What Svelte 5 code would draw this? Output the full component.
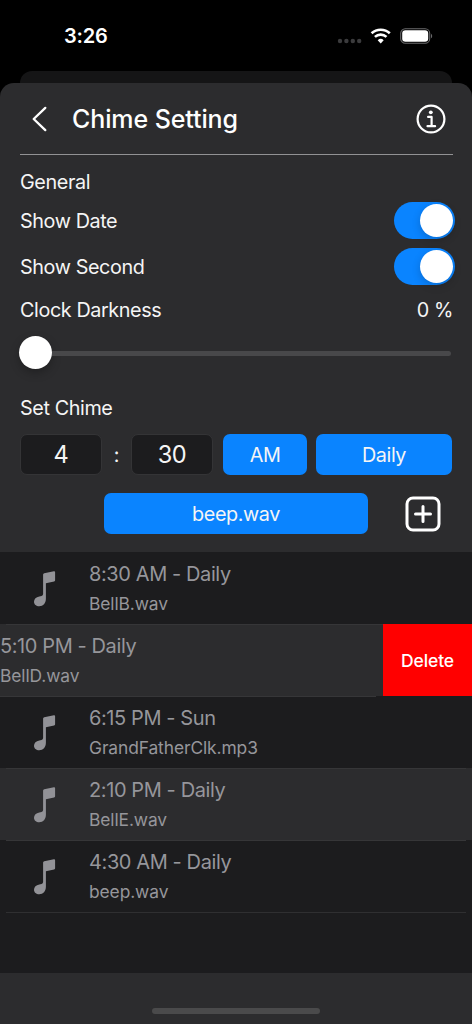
<script>
  let showDate = true;
  let showSecond = true;
  let darkness = 0;

  let chimes = [
    { time: '8:30 AM - Daily', sound: 'BellB.wav' },
    { time: '5:10 PM - Daily', sound: 'BellD.wav', swiped: true },
    { time: '6:15 PM - Sun', sound: 'GrandFatherClk.mp3' },
    { time: '2:10 PM - Daily', sound: 'BellE.wav' },
    { time: '4:30 AM - Daily', sound: 'beep.wav' }
  ];

  function removeChime(chime) {
    chimes = chimes.filter((c) => c !== chime);
  }
</script>

<div class="screen">
  <div class="status-bar">
    <span class="clock">3:26</span>
    <div class="status-icons">
      <svg class="dots" width="26" height="6" viewBox="0 0 26 6" fill="#3b3b3d">
        <circle cx="3" cy="3" r="2.2" />
        <circle cx="9.4" cy="3" r="2.2" />
        <circle cx="15.8" cy="3" r="2.2" />
        <circle cx="22.2" cy="3" r="2.2" />
      </svg>
      <svg class="wifi" width="22" height="16" viewBox="0 0 22 16" fill="none" stroke="#fff">
        <path d="M1.6 5.3a13.5 13.5 0 0 1 18.2 0" stroke-width="2.7" />
        <path d="M4.9 8.9a8.6 8.6 0 0 1 11.6 0" stroke-width="2.6" />
        <path d="M10.7 15.4l-3-3.1a4.3 4.3 0 0 1 6 0z" fill="#fff" stroke="none" />
      </svg>
      <svg class="battery" width="34" height="16" viewBox="0 0 34 16">
        <rect x="0.7" y="0.7" width="29" height="14.6" rx="4.6" fill="none" stroke="#69696b" stroke-width="1.1" />
        <rect x="2.2" y="2.3" width="26" height="11.4" rx="3.2" fill="#fff" />
        <path d="M31 5.700c1.6.7 1.6 3.9 0 4.600z" fill="#69696b" />
      </svg>
    </div>
  </div>
  <div class="back-card"></div>

  <div class="sheet">
    <header>
      <button class="icon-btn" aria-label="Back">
        <svg width="16" height="26" viewBox="0 0 16 26" fill="none" stroke="#fff" stroke-width="2.3" stroke-linecap="round" stroke-linejoin="round">
          <path d="M14.3 1.9L2.7 13l11.6 11.1" />
        </svg>
      </button>
      <h1>Chime Setting</h1>
      <button class="icon-btn" aria-label="Info">
        <svg width="30" height="30" viewBox="0 0 30 30" fill="none" stroke="#fff" stroke-width="2.2">
          <circle cx="15" cy="15" r="13.4" />
          <circle cx="14.8" cy="8.3" r="1.9" fill="#fff" stroke="none" />
          <path d="M12.1 12.9h3.500v9M11.500 22.200h7.600" stroke-linecap="round" stroke-linejoin="round" />
        </svg>
      </button>
    </header>

    <section class="general">
      <h2>General</h2>
      <div class="row">
        <span>Show Date</span>
        <button class="switch" class:on={showDate} aria-label="Show Date" on:click={() => (showDate = !showDate)}>
          <span class="knob"></span>
        </button>
      </div>
      <div class="row">
        <span>Show Second</span>
        <button class="switch" class:on={showSecond} aria-label="Show Second" on:click={() => (showSecond = !showSecond)}>
          <span class="knob"></span>
        </button>
      </div>
      <div class="row darkness">
        <span>Clock Darkness</span>
        <span class="percent">{darkness} %</span>
      </div>
      <div class="slider">
        <div class="thumb"></div>
        <div class="track"></div>
      </div>
    </section>

    <section class="set-chime">
      <h2>Set Chime</h2>
      <div class="time-row">
        <div class="field">4</div>
        <span class="colon">:</span>
        <div class="field">30</div>
        <button class="blue am">AM</button>
        <button class="blue daily">Daily</button>
      </div>
      <div class="sound-row">
        <button class="blue sound">beep.wav</button>
        <button class="icon-btn" aria-label="Add">
          <svg width="36" height="36" viewBox="0 0 36 36" fill="none" stroke="#fff" stroke-width="3">
            <rect x="2" y="2" width="32" height="32" rx="6" />
            <path d="M18 10.500v15M10.500 18h15" stroke-linecap="round" />
          </svg>
        </button>
      </div>
    </section>

    <div class="list">
      {#each chimes as chime}
        <div class="chime" class:swiped={chime.swiped}>
          {#if !chime.swiped}
            <svg class="note" width="24" height="38" viewBox="0 0 24 38" fill="#929297">
              <path d="M10.100 3.600Q10.200 2.500 11.200 2.300L20.900.3q1.200-.2 1.200 1v8q0 1-1 1.200l-8.200 1.700v15.400c0 4.800-2.700 7.700-6.700 7.700C3.300 35.300 1 33.400 1 30.700c0-2.800 2-4.700 5.300-5.300l2.200-.5q1.600-.3 1.600-1.800z" />
            </svg>
          {/if}
          <div class="details">
            <div class="time">{chime.time}</div>
            <div class="file">{chime.sound}</div>
          </div>
          {#if chime.swiped}
            <button class="delete" on:click={() => removeChime(chime)}>Delete</button>
          {/if}
        </div>
      {/each}
      <div class="list-end"></div>
    </div>

    <footer>
      <div class="home-bar"></div>
    </footer>
  </div>
</div>

<style>
  :global(body) {
    background: #000;
  }

  .screen {
    width: 472px;
    height: 1024px;
    overflow: hidden;
    background: #000;
    color: #f5f5f5;
    font-family: Inter, "Liberation Sans", sans-serif;
    font-size: 19.8px;
    letter-spacing: -0.4px;
    display: flex;
    flex-direction: column;
  }

  button {
    border: none;
    padding: 0;
    background: none;
    color: inherit;
    font: inherit;
    letter-spacing: inherit;
  }

  svg {
    display: block;
  }

  .status-bar {
    height: 71px;
    box-sizing: border-box;
    padding: 0 38px 0 64px;
    display: flex;
    align-items: center;
    justify-content: space-between;
  }

  .clock {
    font-size: 20px;
    font-weight: 600;
    letter-spacing: -0.2px;
    color: #fff;
  }

  .status-icons {
    display: flex;
    align-items: center;
  }

  .dots {
    margin: 11px 7px 0 0;
  }

  .wifi {
    margin-right: 8px;
  }

  .back-card {
    height: 12px;
    margin: 0 20px;
    background: #151516;
    border-radius: 12px 12px 0 0;
  }

  .sheet {
    flex: 1;
    display: flex;
    flex-direction: column;
    background: #2c2c2e;
    border-radius: 14px 14px 0 0;
  }

  header {
    height: 71px;
    margin: 0 19px 0 20px;
    padding: 0 7px 0 11px;
    display: flex;
    align-items: center;
    border-bottom: 1px solid #929294;
  }

  h1 {
    flex: 1;
    margin: 0 0 0 25px;
    font-size: 25px;
    font-weight: 500;
    letter-spacing: -0.1px;
    color: #fff;
  }

  h2 {
    margin: 0;
    height: 32px;
    line-height: 32px;
    font-size: inherit;
    font-weight: 400;
  }

  .general {
    padding: 11px 20px 0;
  }

  .row {
    height: 46px;
    display: flex;
    align-items: center;
    justify-content: space-between;
  }

  .darkness {
    height: 40px;
  }

  .percent {
    margin-right: -1px;
  }

  .switch {
    width: 61px;
    height: 37px;
    margin: 0 -3px 1px 0;
    padding: 2px;
    border-radius: 19px;
    background: #39393d;
    display: flex;
  }

  .switch.on {
    background: #0a84ff;
    justify-content: flex-end;
  }

  .knob {
    width: 33px;
    height: 33px;
    border-radius: 50%;
    background: #fff;
    box-shadow: 0 3px 8px rgba(0, 0, 0, 0.18);
  }

  .slider {
    height: 33px;
    margin: 6px 0 0 -1px;
    display: flex;
    align-items: center;
  }

  .thumb {
    width: 33px;
    height: 33px;
    border-radius: 50%;
    background: #fff;
    box-shadow: 0 4px 10px rgba(0, 0, 0, 0.25);
  }

  .track {
    flex: 1;
    height: 5px;
    margin: 2px 1px 0 0;
    background: #48484a;
    border-radius: 0 3px 3px 0;
  }

  .set-chime {
    height: 160px;
    padding: 0 20px;
    margin-top: 23px;
  }

  .time-row {
    display: flex;
    align-items: center;
    margin-top: 10px;
  }

  .field {
    box-sizing: border-box;
    width: 82px;
    height: 41px;
    background: #1c1c1e;
    border: 1px solid #343436;
    border-radius: 7px;
    display: flex;
    align-items: center;
    justify-content: center;
    font-size: 23.6px;
  }

  .colon {
    width: 29px;
    text-align: center;
  }

  .blue {
    height: 41px;
    background: #0a84ff;
    border-radius: 7px;
  }

  .am {
    width: 84px;
    margin: 0 9px 0 10px;
  }

  .daily {
    flex: 1;
  }

  .sound-row {
    display: flex;
    align-items: center;
    margin: 18px 11px 0 84px;
    justify-content: space-between;
  }

  .sound {
    width: 264px;
  }

  .list {
    flex: 1;
    background: #1c1c1e;
  }

  .chime {
    height: 72px;
    display: flex;
    align-items: center;
    color: #96969b;
    background: linear-gradient(#363638, #363638) 6px 0 / 460px 1px no-repeat;
  }

  .chime:first-child {
    background: none;
  }

  .chime:nth-child(even) {
    background-color: #2c2c2e;
  }

  .chime.swiped + .chime {
    background-position: -84px 0;
  }

  .list-end {
    height: 1px;
    margin: 0 6px;
    background: #2f2f31;
  }

  .note {
    margin: 3px 32px 0 33px;
  }

  .details {
    flex: 1;
    padding-top: 1px;
  }

  .time {
    height: 30px;
    line-height: 30px;
    font-size: 20px;
  }

  .file {
    height: 29px;
    line-height: 29px;
    font-size: 17.4px;
    letter-spacing: -0.1px;
  }

  .delete {
    width: 89px;
    height: 72px;
    background: #ff0000;
    color: #fff;
    font-size: 17.5px;
    font-weight: 500;
    letter-spacing: -0.1px;
  }

  footer {
    height: 51px;
    display: flex;
    justify-content: center;
    align-items: flex-end;
  }

  .home-bar {
    width: 168px;
    height: 6px;
    margin-bottom: 10px;
    border-radius: 3px;
    background: #4a4a4b;
  }
</style>
